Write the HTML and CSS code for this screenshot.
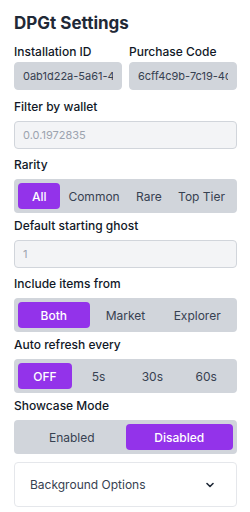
FILE: index.html
```html
<!DOCTYPE html>
<html lang="en">
  <head>
    <meta charset="UTF-8">
    <meta name="viewport" content="width=device-width, initial-scale=1.0">
    <link rel="stylesheet" href="styles.css">
    <title>DPGt Settings</title>
  </head>
  <body>
    <h1 class="title">DPGt Settings</h1>

    <div class="pair">
      <div class="field">
        <label class="label label-tight">Installation ID</label>
        <input class="input input-locked" type="text" value="0ab1d22a-5a61-4f0e-9c1a-2b7d" readonly>
      </div>
      <div class="field">
        <label class="label label-tight">Purchase Code</label>
        <input class="input input-locked" type="text" value="6cff4c9b-7c19-4dc2-8e31-a0f5" readonly>
      </div>
    </div>

    <div class="group group-input">
      <label class="label">Filter by wallet</label>
      <input class="input" type="text" placeholder="0.0.1972835">
    </div>

    <div class="group">
      <label class="label">Rarity</label>
      <div class="segment">
        <button class="seg-btn active">All</button>
        <button class="seg-btn">Common</button>
        <button class="seg-btn">Rare</button>
        <button class="seg-btn">Top Tier</button>
      </div>
    </div>

    <div class="group group-input">
      <label class="label">Default starting ghost</label>
      <input class="input" type="text" placeholder="1">
    </div>

    <div class="group">
      <label class="label">Include items from</label>
      <div class="segment">
        <button class="seg-btn active">Both</button>
        <button class="seg-btn">Market</button>
        <button class="seg-btn">Explorer</button>
      </div>
    </div>

    <div class="group">
      <label class="label">Auto refresh every</label>
      <div class="segment">
        <button class="seg-btn active">OFF</button>
        <button class="seg-btn">5s</button>
        <button class="seg-btn">30s</button>
        <button class="seg-btn">60s</button>
      </div>
    </div>

    <div class="group group-last">
      <label class="label">Showcase Mode</label>
      <div class="segment">
        <button class="seg-btn">Enabled</button>
        <button class="seg-btn active">Disabled</button>
      </div>
    </div>

    <div class="collapse">
      <span>Background Options</span>
      <svg class="chevron" width="8" height="6" viewBox="0 0 8 6">
        <path d="M1 1.5 L4 4.5 L7 1.5" fill="none" stroke="#1f2937" stroke-width="1.6" stroke-linecap="round" stroke-linejoin="round"/>
      </svg>
    </div>
  </body>
</html>
```

FILE: styles.css
```css
body {
  font-family: Inter, "Noto Sans", sans-serif;
  background-color: #ffffff;
  color: #111827;
  margin: 0;
  padding: 13px 13px 0 14px;
}

.title {
  font-size: 17px;
  font-weight: 700;
  line-height: 20px;
  margin: 0 0 12px;
  color: #1f2937;
}

.label {
  display: block;
  font-size: 12px;
  font-weight: 500;
  line-height: 14px;
  margin-bottom: 7px;
  color: #111827;
}

.label-tight {
  margin-bottom: 3px;
}

.pair {
  display: grid;
  grid-template-columns: 1fr 1fr;
  gap: 7px;
  margin-bottom: 10px;
}

.field {
  min-width: 0;
}

.input {
  display: block;
  box-sizing: border-box;
  width: 100%;
  height: 28px;
  padding: 0 8px;
  font-family: inherit;
  font-size: 11px;
  color: #374151;
  background-color: #f3f4f6;
  border: 1px solid #d1d5db;
  border-radius: 4px;
  outline: none;
}

.input::placeholder {
  color: #9ca3af;
}

.input-locked {
  background-color: #d1d5db;
  border-color: #d1d5db;
}

.group {
  margin-bottom: 6px;
}

.group-input {
  margin-bottom: 9px;
}

.group-last {
  margin-bottom: 8px;
}

.segment {
  display: flex;
  padding: 4px;
  background-color: #d1d5db;
  border-radius: 4px;
}

.seg-btn {
  flex: 1;
  height: 26px;
  padding: 0 8px;
  font-family: inherit;
  font-size: 12px;
  font-weight: 400;
  color: #374151;
  background: none;
  border: none;
  border-radius: 4px;
  cursor: pointer;
  white-space: nowrap;
}

.seg-btn.active {
  background-color: #9333ea;
  color: #ffffff;
  font-weight: 500;
}

.collapse {
  display: flex;
  justify-content: space-between;
  align-items: center;
  box-sizing: border-box;
  height: 45px;
  padding: 0 22px 0 15px;
  font-size: 12px;
  color: #374151;
  border: 1px solid #e5e7eb;
  border-radius: 4px;
}

.chevron {
  display: block;
}
```
